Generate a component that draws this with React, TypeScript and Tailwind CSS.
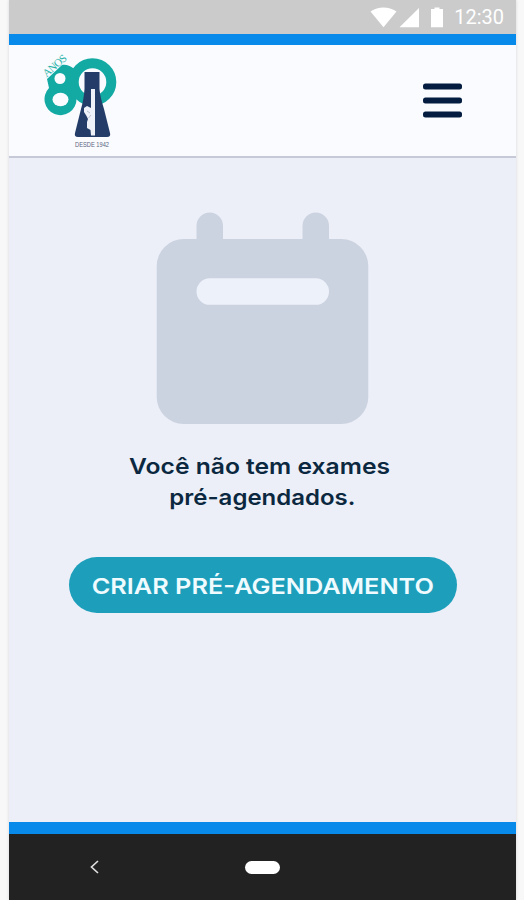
function StatusBar() {
  return (
    <div className="flex h-[34px] shrink-0 items-center justify-end bg-[#cbcbcb] pr-3">
      <svg className="h-[34px] w-[78px] text-white" viewBox="0 0 78 34" fill="currentColor">
        <path d="M0.5 11.5C8.5 6 18.500 6 26.500 11.500L13.500 27.200Z" />
        <path d="M49 8V27.200H29.500Z" />
        <path d="M64.500 7.500H69.500V9H73V27.200H61V9H64.500Z" />
      </svg>
      <span className="ml-[6px] font-['Roboto',sans-serif] text-[20px] leading-[33px] text-white">
        12:30
      </span>
    </div>
  );
}

function Logo() {
  return (
    <svg className="h-[100px] w-[80px]" viewBox="0 0 80 100">
      <circle cx="52.500" cy="31" r="18.800" fill="none" stroke="#14aaa4" strokeWidth="10" />
      <path
        fill="#14aaa4"
        d="M7 28L22 14C26 13 30 15 33 17L36 38C37 42 37 45 36.500 48A16 16 0 1 1 9 37Z"
      />
      <circle cx="20" cy="27.500" r="5.500" fill="#f9fbfe" />
      <ellipse cx="20.500" cy="48.500" rx="8" ry="6.700" fill="#f9fbfe" />
      <path
        d="M44.500 21H59.500V38C60 45 62 51 64 58L70 82Q71 86 67 86H38Q34 86 35 82L41 58C43 51 44 45 44.500 38Z"
        fill="#243d68"
      />
      <path
        d="M51 38H55V84.500H51L50.500 79L47 77V71L48 68L46.500 65L44 61V57L47 55L51 57Z"
        fill="#eef2f8"
      />
      <path d="M47 60L50 62M48.500 67L51 64" stroke="#a7b3c6" strokeWidth="0.8" />
      <text
        x="6.500"
        y="26.500"
        transform="rotate(-41 6.5 26.5)"
        fill="#2ab3a8"
        fontFamily="Liberation Serif, serif"
        fontSize="11"
        textLength="28"
      >
        ANOS
      </text>
      <text
        x="35"
        y="96"
        fill="#59657f"
        fontFamily="Liberation Sans, sans-serif"
        fontSize="7"
        textLength="34"
        lengthAdjust="spacingAndGlyphs"
      >
        DESDE 1942
      </text>
    </svg>
  );
}

function Header() {
  return (
    <header className="flex h-[113px] shrink-0 items-start justify-between border-b-2 border-[#c6cad8] bg-[#f9fbfe] pt-[6px] pr-[54px] pl-[31px]">
      <Logo />
      <button className="mt-[32px] w-[39px]" aria-label="Menu">
        <svg className="h-[35px] w-[39px]" viewBox="0 0 39 35" fill="#041c3f">
          <rect y="0.500" width="39" height="6" rx="2.500" />
          <rect y="14.500" width="39" height="6" rx="2.500" />
          <rect y="28.500" width="39" height="6" rx="2.500" />
        </svg>
      </button>
    </header>
  );
}

function CalendarIcon() {
  return (
    <svg className="h-[213px] w-[213px]" viewBox="0 0 213 213">
      <g fill="#ccd3e0">
        <rect x="40.500" y="0.500" width="26.500" height="50" rx="13.250" />
        <rect x="146.500" y="0.500" width="26.500" height="50" rx="13.250" />
        <rect x="0.700" y="27" width="211.600" height="185" rx="27" />
      </g>
      <rect x="40.500" y="66.300" width="132.500" height="26.500" rx="13.250" fill="#edf1fa" />
    </svg>
  );
}

function EmptyState() {
  return (
    <main className="flex flex-1 flex-col items-center bg-[#eceff8] pt-[54px]">
      <CalendarIcon />
      <p className="mt-[26px] flex flex-col items-center font-['Inter',sans-serif] text-[22px] leading-[31px] font-semibold text-[#0b2840]">
        <span className="mr-[5px] scale-x-[1.12]">Você não tem exames</span>
        <span className="scale-x-[1.09]">pré-agendados.</span>
      </p>
      <button className="mt-[44px] h-[56px] w-[388px] rounded-full bg-[#1d9fbb] pt-[2px] font-['Inter',sans-serif] text-[22px] font-semibold whitespace-nowrap text-[#effbff]">
        <span className="inline-block scale-x-[1.15]">CRIAR PRÉ-AGENDAMENTO</span>
      </button>
    </main>
  );
}

function NavigationBar() {
  return (
    <nav className="flex h-[66px] shrink-0 items-center bg-[#222222] pl-[80px]">
      <svg className="h-[16px] w-[11px]" viewBox="0 0 11 16" fill="none">
        <path d="M9 2L2.500 8L9 14" stroke="#dedede" strokeWidth="1.700" />
      </svg>
      <span className="ml-[145px] h-[13px] w-[35px] rounded-full bg-white" />
    </nav>
  );
}

export default function App() {
  return (
    <div className="h-[900px] w-[524px] overflow-hidden bg-[#f8f8f8] pl-[9px]">
      <div className="flex h-full w-[507px] flex-col shadow-[0_0_3px_#d5d5da]">
        <StatusBar />
        <div className="h-[11px] shrink-0 bg-[#078ae9]" />
        <Header />
        <EmptyState />
        <div className="h-[12px] shrink-0 bg-[#078ae9]" />
        <NavigationBar />
      </div>
    </div>
  );
}
